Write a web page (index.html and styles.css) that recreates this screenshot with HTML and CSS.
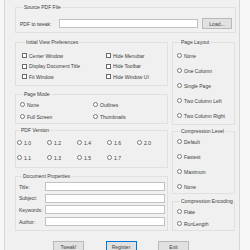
FILE: index.html
```html
<!DOCTYPE html>
<html lang="en">
<head>
  <meta charset="utf-8">
  <title>PDF Tweaker</title>
  <link rel="stylesheet" href="styles.css">
</head>
<body>
  <div class="window">
    <fieldset class="group source">
      <legend>Source PDF File</legend>
      <div class="file-row">
        <span class="lbl">PDF to tweak:</span>
        <span class="field"></span>
        <span class="btn load">Load...</span>
      </div>
    </fieldset>

    <div class="main">
      <div class="col">
        <fieldset class="group view">
          <legend>Initial View Preferences</legend>
          <div class="checks">
            <span class="opt"><i class="box"></i>Center Window</span>
            <span class="opt"><i class="box"></i>Hide Menubar</span>
            <span class="opt"><i class="box"></i>Display Document Title</span>
            <span class="opt"><i class="box"></i>Hide Toolbar</span>
            <span class="opt"><i class="box"></i>Fit Window</span>
            <span class="opt"><i class="box"></i>Hide Window UI</span>
          </div>
        </fieldset>

        <fieldset class="group mode">
          <legend>Page Mode</legend>
          <div class="modes">
            <span class="opt"><i class="dot"></i>None</span>
            <span class="opt"><i class="dot"></i>Outlines</span>
            <span class="opt"><i class="dot"></i>Full Screen</span>
            <span class="opt"><i class="dot"></i>Thumbnails</span>
          </div>
        </fieldset>

        <fieldset class="group version">
          <legend>PDF Version</legend>
          <div class="versions">
            <span class="opt"><i class="dot"></i>1.0</span>
            <span class="opt"><i class="dot"></i>1.2</span>
            <span class="opt"><i class="dot"></i>1.4</span>
            <span class="opt"><i class="dot"></i>1.6</span>
            <span class="opt"><i class="dot"></i>2.0</span>
            <span class="opt"><i class="dot"></i>1.1</span>
            <span class="opt"><i class="dot"></i>1.3</span>
            <span class="opt"><i class="dot"></i>1.5</span>
            <span class="opt"><i class="dot"></i>1.7</span>
          </div>
        </fieldset>

        <fieldset class="group props">
          <legend>Document Properties</legend>
          <div class="prop"><span class="lbl">Title:</span><span class="field"></span></div>
          <div class="prop"><span class="lbl">Subject:</span><span class="field"></span></div>
          <div class="prop"><span class="lbl">Keywords:</span><span class="field"></span></div>
          <div class="prop"><span class="lbl">Author:</span><span class="field"></span></div>
        </fieldset>
      </div>

      <div class="col">
        <fieldset class="group layout">
          <legend>Page Layout</legend>
          <div class="list">
            <span class="opt"><i class="dot"></i>None</span>
            <span class="opt"><i class="dot"></i>One Column</span>
            <span class="opt"><i class="dot"></i>Single Page</span>
            <span class="opt"><i class="dot"></i>Two Column Left</span>
            <span class="opt"><i class="dot"></i>Two Column Right</span>
          </div>
        </fieldset>

        <fieldset class="group level">
          <legend>Compression Level</legend>
          <div class="list">
            <span class="opt"><i class="dot"></i>Default</span>
            <span class="opt"><i class="dot"></i>Fastest</span>
            <span class="opt"><i class="dot"></i>Maximum</span>
            <span class="opt"><i class="dot"></i>None</span>
          </div>
        </fieldset>

        <fieldset class="group encoding">
          <legend>Compression Encoding</legend>
          <div class="list">
            <span class="opt"><i class="dot"></i>Flate</span>
            <span class="opt"><i class="dot"></i>RunLength</span>
          </div>
        </fieldset>
      </div>
    </div>

    <div class="actions">
      <span class="btn wide">Tweak!</span>
      <span class="btn wide default">Register</span>
      <span class="btn wide">Exit</span>
    </div>
  </div>
</body>
</html>
```

FILE: styles.css
```css
* { margin: 0; padding: 0; box-sizing: border-box; }
body {
  background: #f7f7f7;
  font-family: "Liberation Sans", Arial, sans-serif;
  font-size: 5px; color: #3c3c3c;
}
.window {
  margin-left: 4px; width: 236px; height: 250px; overflow: hidden;
  background: #f0f0f0; border-left: 1px solid #d6d6d6; border-right: 1px solid #d6d6d6;
  padding: 4px 3px 0 10px;
}
.group { border: 1px solid #e0e0e0; min-width: 0; }
legend { padding: 0 1px; margin-left: 3px; line-height: 7px; white-space: nowrap; }

.source { height: 29px; padding: 7px 3px 0 4px; }
.file-row { display: flex; align-items: center; height: 11px; }
.file-row .lbl { width: 39px; }
.file-row .field { width: 139px; }
.field { height: 9px; background: #fff; border: 1px solid #c2c2c2; }
.btn {
  display: flex; align-items: center; justify-content: center;
  background: #e1e1e1; border: 1px solid #b9b9b9;
}
.load { width: 30px; height: 11px; margin-left: 4px; }

.main { display: grid; grid-template-columns: 153px 63px; column-gap: 4px; margin-top: 6px; }
.col { display: flex; flex-direction: column; }

.opt { display: flex; align-items: center; gap: 2px; height: 7px; white-space: nowrap; }
.box { width: 5px; height: 5px; border: 1px solid #6a6a6a; background: #fff; }
.dot { width: 5px; height: 5px; border: 1px solid #7a7a7a; border-radius: 50%; background: #fff; }

.view { height: 47px; padding: 6px 0 0 6px; }
.checks { display: grid; grid-template-columns: 84px 1fr; row-gap: 3.5px; }

.mode { height: 33px; margin-top: 5px; padding: 3px 0 0 4px; }
.modes { display: grid; grid-template-columns: 73px 1fr; row-gap: 5px; }

.version { height: 41px; margin-top: 3px; padding: 5px 0 0 1px; }
.versions { display: grid; grid-template-columns: repeat(5, 30px); row-gap: 8px; }

.props { height: 58px; margin-top: 5px; padding: 2px 2px 0 3px; display: flex; flex-direction: column; gap: 2.7px; }
.prop { display: flex; align-items: center; }
.prop .lbl { width: 26px; }
.prop .field { width: 122px; }

.list { display: flex; flex-direction: column; }
.layout { height: 86px; padding: 6px 0 0 4px; }
.layout .list { gap: 8px; }
.level { height: 66px; margin-top: 3px; padding: 3px 0 0 4px; }
.level .list { gap: 8px; }
.encoding { height: 33px; margin-top: 4px; padding: 3px 0 0 4px; }
.encoding .list { gap: 5px; }

.actions { display: flex; gap: 21.5px; margin-top: 10px; padding-left: 38px; }
.wide { width: 31px; height: 11px; }
.default { border-color: #0078d7; }
```
